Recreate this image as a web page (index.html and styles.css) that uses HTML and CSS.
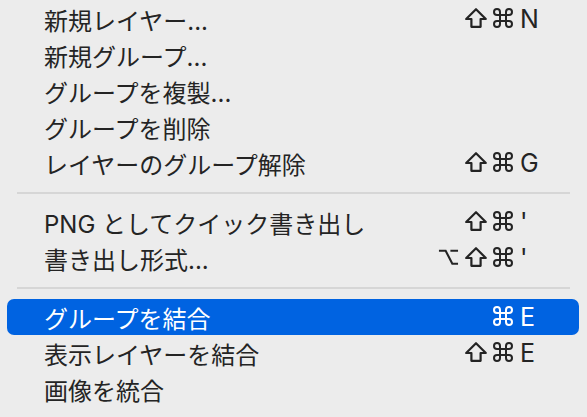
FILE: index.html
```html
<!DOCTYPE html>
<html lang="ja">
<head>
  <meta charset="UTF-8" />
  <title>レイヤーメニュー</title>
  <link rel="stylesheet" href="styles.css">
</head>
<body>

  <div class="menu">
    <ul class="menu-list">
      <li class="item">
        <span class="label">新規レイヤー...</span>
        <span class="keys">
          <span class="mods">
            <svg class="mod" viewBox="0 0 22 20"><path d="M11 1.2 L1.2 11 H6.4 V18.8 H15.6 V11 H20.8 Z"/></svg>
            <svg class="mod cmd" viewBox="2 2 20 20"><path d="M15 6v12a3 3 0 1 0 3-3H6a3 3 0 1 0 3 3V6a3 3 0 1 0-3 3h12a3 3 0 1 0-3-3"/></svg>
          </span>
          <span class="key">N</span>
        </span>
      </li>
      <li class="item"><span class="label">新規グループ...</span></li>
      <li class="item"><span class="label">グループを複製...</span></li>
      <li class="item"><span class="label">グループを削除</span></li>
      <li class="item">
        <span class="label">レイヤーのグループ解除</span>
        <span class="keys">
          <span class="mods">
            <svg class="mod" viewBox="0 0 22 20"><path d="M11 1.2 L1.2 11 H6.4 V18.8 H15.6 V11 H20.8 Z"/></svg>
            <svg class="mod cmd" viewBox="2 2 20 20"><path d="M15 6v12a3 3 0 1 0 3-3H6a3 3 0 1 0 3 3V6a3 3 0 1 0-3 3h12a3 3 0 1 0-3-3"/></svg>
          </span>
          <span class="key">G</span>
        </span>
      </li>

      <li class="sep"></li>

      <li class="item">
        <span class="label">PNG としてクイック書き出し</span>
        <span class="keys">
          <span class="mods">
            <svg class="mod" viewBox="0 0 22 20"><path d="M11 1.2 L1.2 11 H6.4 V18.8 H15.6 V11 H20.8 Z"/></svg>
            <svg class="mod cmd" viewBox="2 2 20 20"><path d="M15 6v12a3 3 0 1 0 3-3H6a3 3 0 1 0 3 3V6a3 3 0 1 0-3 3h12a3 3 0 1 0-3-3"/></svg>
          </span>
          <span class="key">'</span>
        </span>
      </li>
      <li class="item">
        <span class="label">書き出し形式...</span>
        <span class="keys">
          <span class="mods">
            <svg class="mod opt" viewBox="0 0 22 20"><path d="M1 3.5 H8 L15 17 H21 M13 3.5 H21"/></svg>
            <svg class="mod" viewBox="0 0 22 20"><path d="M11 1.2 L1.2 11 H6.4 V18.8 H15.6 V11 H20.8 Z"/></svg>
            <svg class="mod cmd" viewBox="2 2 20 20"><path d="M15 6v12a3 3 0 1 0 3-3H6a3 3 0 1 0 3 3V6a3 3 0 1 0-3 3h12a3 3 0 1 0-3-3"/></svg>
          </span>
          <span class="key">'</span>
        </span>
      </li>

      <li class="sep"></li>

      <li class="item active">
        <span class="label">グループを結合</span>
        <span class="keys">
          <span class="mods">
            <svg class="mod cmd" viewBox="2 2 20 20"><path d="M15 6v12a3 3 0 1 0 3-3H6a3 3 0 1 0 3 3V6a3 3 0 1 0-3 3h12a3 3 0 1 0-3-3"/></svg>
          </span>
          <span class="key">E</span>
        </span>
      </li>
      <li class="item">
        <span class="label">表示レイヤーを結合</span>
        <span class="keys">
          <span class="mods">
            <svg class="mod" viewBox="0 0 22 20"><path d="M11 1.2 L1.2 11 H6.4 V18.8 H15.6 V11 H20.8 Z"/></svg>
            <svg class="mod cmd" viewBox="2 2 20 20"><path d="M15 6v12a3 3 0 1 0 3-3H6a3 3 0 1 0 3 3V6a3 3 0 1 0-3 3h12a3 3 0 1 0-3-3"/></svg>
          </span>
          <span class="key">E</span>
        </span>
      </li>
      <li class="item"><span class="label">画像を統合</span></li>

      <li class="sep"></li>
    </ul>
  </div>

</body>
</html>
```

FILE: styles.css
```css
* {
  box-sizing: border-box;
}

body {
  margin: 0;
  background: #ececec;
  font-family: 'Inter', 'Noto Sans CJK JP', sans-serif;
  color: #242424;
}

.menu {
  width: 587px;
  height: 417px;
  overflow: hidden;
  padding-top: 1px;
}

.menu-list {
  list-style: none;
  margin: 0;
  padding: 0;
}

.item {
  display: flex;
  align-items: center;
  justify-content: space-between;
  height: 36px;
  margin: 0 8px 0 7px;
  padding: 0 35px 0 37px;
  border-radius: 7px;
  font-size: 24px;
}

.item.active {
  background: #0063e1;
  color: #fff;
}

.label {
  white-space: nowrap;
}

.keys {
  display: flex;
  align-items: center;
}

.mods {
  display: flex;
  align-items: center;
  gap: 6px;
  margin-top: -2px;
}

.mod {
  width: 22px;
  height: 20px;
  fill: none;
  stroke: currentColor;
  stroke-width: 2.2;
  stroke-linejoin: round;
}

.mod.cmd {
  width: 20px;
  stroke-width: 2;
}

.mod.opt {
  width: 21px;
  stroke-linejoin: miter;
}

.key {
  width: 24px;
  margin-left: 7px;
  font-size: 25px;
}

.sep {
  height: 2px;
  margin: 11px 17px 10px;
  background: #d6d6d6;
}
```
